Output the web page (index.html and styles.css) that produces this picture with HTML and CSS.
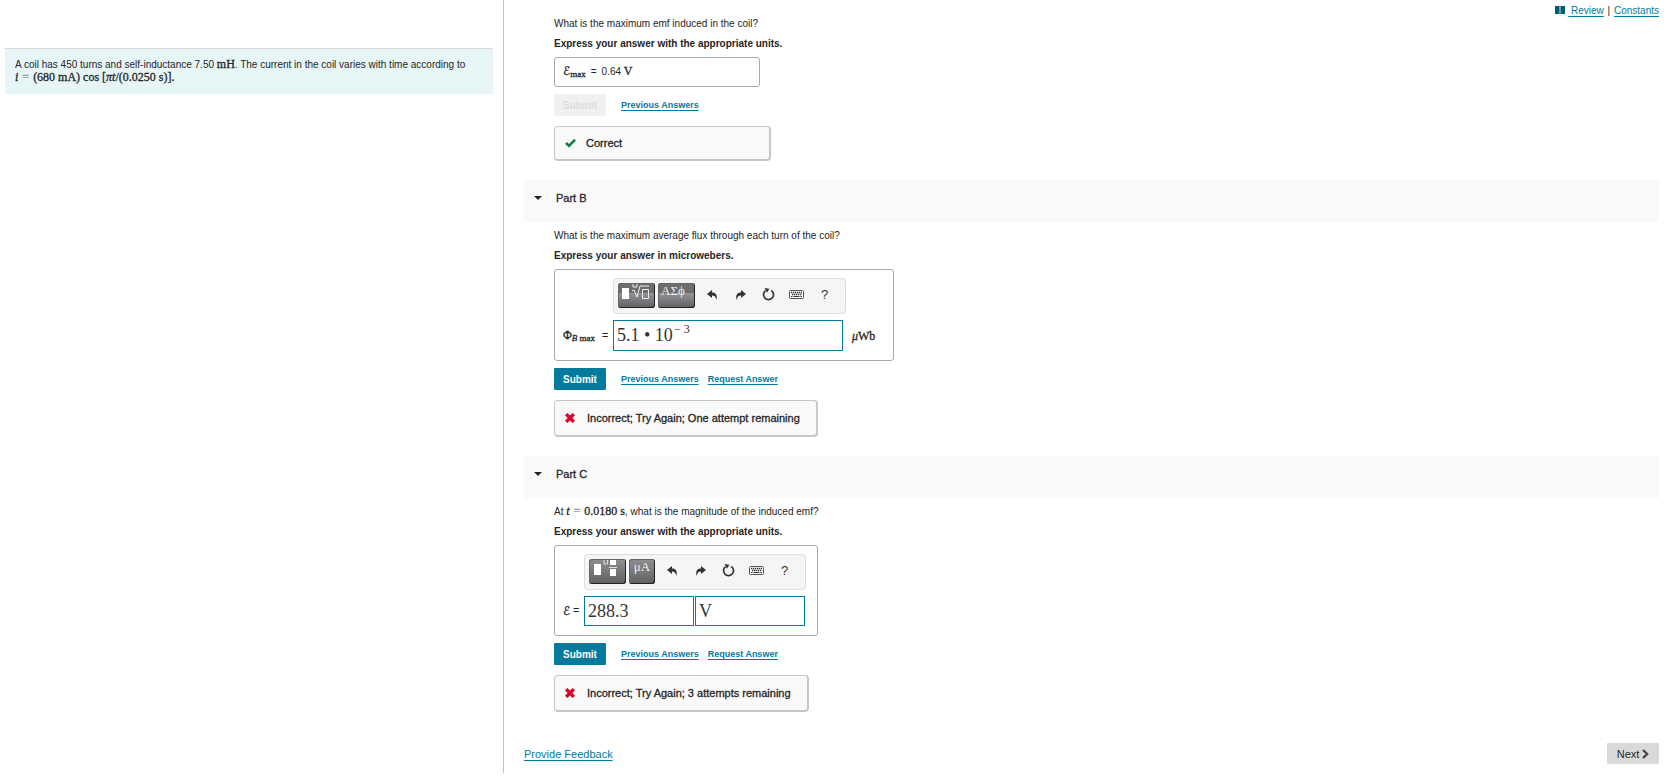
FILE: index.html
```html
<!DOCTYPE html>
<html lang="en">
<head>
    <meta charset="UTF-8">
    <meta name="viewport" content="width=device-width, initial-scale=1.0">
    <title>Self-inductance of a coil</title>
    <link rel="stylesheet" href="styles.css">
</head>
<body>

<svg class="sprite" width="0" height="0" aria-hidden="true">
    <symbol id="undo" viewBox="0 0 12 12">
        <path d="M0 5 L5 1 V3.5 C9 3.5 10.5 6 9.5 11 C8.8 8 7.5 6.6 5 6.6 V9 Z"/>
    </symbol>
    <symbol id="redo" viewBox="0 0 12 12">
        <path d="M11 5 L6 1 V3.5 C2 3.5 .5 6 1.5 11 C2.2 8 3.5 6.6 6 6.6 V9 Z"/>
    </symbol>
    <symbol id="reset" viewBox="0 0 13 13">
        <path d="M9.2 2.4 A5 5 0 1 1 3.6 2.6" fill="none" stroke="#333" stroke-width="1.7"/>
        <path d="M2.6 0 L7.4 .8 L5 4.8 Z"/>
    </symbol>
    <symbol id="keyboard" viewBox="0 0 15 9">
        <rect x=".5" y=".5" width="14" height="8" rx="1" fill="#fff" stroke="#555"/>
        <path d="M2 2.5 H13 M3 4.5 H13" stroke="#333" stroke-width="1.4" stroke-dasharray="1.3 .7"/>
        <path d="M2 6.5 H3.5 M4.5 6.5 H10.5 M11.5 6.5 H13" stroke="#333"/>
    </symbol>
    <symbol id="cross" viewBox="0 0 10 10">
        <path d="M0 2.3 L2.3 0 L5 2.6 L7.7 0 L10 2.3 L7.3 5 L10 7.7 L7.7 10 L5 7.4 L2.3 10 L0 7.7 L2.7 5 Z" fill="#e00025"/>
    </symbol>
</svg>

<div class="page">
    <aside class="problem">
        <p>A coil has 450 turns and self-inductance 7.50 <span class="math">mH</span>. The current in the coil varies with time according to <span class="math formula"><i>i</i> <span class="eq">=</span> (680 mA) cos [<i>πt</i>/(0.0250 s)].</span></p>
    </aside>

    <main>
        <nav>
            <a href="#"><svg width="10" height="8" viewBox="0 0 10 8"><path d="M0 0 H4.6 V8 H0 Z M5.4 0 H10 V8 H5.4 Z" fill="#005a70"/></svg></a><a href="#">&nbsp;Review</a>
            <span class="sep">|</span>
            <a href="#">Constants</a>
        </nav>

        <section class="part first">
            <p class="question">What is the maximum emf induced in the coil?</p>
            <p class="units">Express your answer with the appropriate units.</p>
            <div class="answer given">
                <span class="math"><span class="script">ℰ</span><sub>max</sub></span><span>=</span><span>0.64 <span class="math">V</span></span>
            </div>
            <div class="actions">
                <button class="submit" disabled>Submit</button>
                <a href="#">Previous Answers</a>
            </div>
            <div class="feedback correct">
                <svg width="11" height="9" viewBox="0 0 11 9"><path d="M0 5 L2 3 L4 5 L9 0 L11 1.6 L4.2 8.6 Z" fill="#0a7d3e"/></svg>
                <span>Correct</span>
            </div>
        </section>

        <h2><span class="arrow"></span>Part B</h2>
        <section class="part">
            <p class="question">What is the maximum average flux through each turn of the coil?</p>
            <p class="units">Express your answer in microwebers.</p>
            <div class="answer flux">
                <div class="toolbar">
                    <button class="tool dark split" aria-label="Templates">
                        <svg width="37" height="25" viewBox="0 0 37 25"><rect x="4" y="5" width="7" height="11" fill="#fff"/><path d="M14 8 L16 7 L19 14 L22 3 H31 M15 1 V4 H19 V1 M24.5 6.5 H30.5 V15.5 H24.5 Z" fill="none" stroke="#eee"/></svg>
                    </button>
                    <button class="tool dark split greek">ΑΣϕ</button>
                    <button class="tool" aria-label="Undo"><svg width="12" height="12"><use href="#undo"/></svg></button>
                    <button class="tool" aria-label="Redo"><svg width="12" height="12"><use href="#redo"/></svg></button>
                    <button class="tool" aria-label="Reset"><svg width="13" height="13"><use href="#reset"/></svg></button>
                    <button class="tool" aria-label="Keyboard"><svg width="15" height="9"><use href="#keyboard"/></svg></button>
                    <button class="tool">?</button>
                </div>
                <label class="math" for="flux"><span>Φ<sub><i>B</i> max</sub></span> <span class="equals">=</span></label>
                <div class="field">
                    <input id="flux" class="base" value="5.1 • 10">
                    <input class="exponent" value="− 3" aria-label="Exponent">
                </div>
                <span class="math unit"><i>μ</i>Wb</span>
            </div>
            <div class="actions">
                <button class="submit">Submit</button>
                <a href="#">Previous Answers</a>
                <a href="#">Request Answer</a>
            </div>
            <div class="feedback">
                <svg width="10" height="10"><use href="#cross"/></svg>
                <span>Incorrect; Try Again; One attempt remaining</span>
            </div>
        </section>

        <h2><span class="arrow"></span>Part C</h2>
        <section class="part">
            <p class="question">At <span class="math"><i>t</i> <span class="eq">=</span> 0.0180 s</span>, what is the magnitude of the induced emf?</p>
            <p class="units">Express your answer with the appropriate units.</p>
            <div class="answer emf">
                <div class="toolbar">
                    <button class="tool dark" aria-label="Templates">
                        <svg width="37" height="25" viewBox="0 0 37 25"><rect x="5" y="5" width="7" height="11" fill="#fff"/><path d="M15 1 V5 H18.5 V1 M20 8.5 H28" fill="none" stroke="#ddd"/><rect x="21" y="1" width="6" height="5" fill="#fff"/><rect x="21" y="10" width="6" height="7" fill="#fff"/></svg>
                    </button>
                    <button class="tool dark narrow">μA</button>
                    <button class="tool" aria-label="Undo"><svg width="12" height="12"><use href="#undo"/></svg></button>
                    <button class="tool" aria-label="Redo"><svg width="12" height="12"><use href="#redo"/></svg></button>
                    <button class="tool" aria-label="Reset"><svg width="13" height="13"><use href="#reset"/></svg></button>
                    <button class="tool" aria-label="Keyboard"><svg width="15" height="9"><use href="#keyboard"/></svg></button>
                    <button class="tool">?</button>
                </div>
                <label class="math" for="emf"><span class="script">ℰ</span> <span class="equals">=</span></label>
                <div class="pair">
                    <input id="emf" class="field" value="288.3">
                    <input class="field" value="V" aria-label="Units">
                </div>
            </div>
            <div class="actions">
                <button class="submit">Submit</button>
                <a href="#">Previous Answers</a>
                <a href="#">Request Answer</a>
            </div>
            <div class="feedback">
                <svg width="10" height="10"><use href="#cross"/></svg>
                <span>Incorrect; Try Again; 3 attempts remaining</span>
            </div>
        </section>

        <footer>
            <a href="#">Provide Feedback</a>
            <button class="next">Next <svg width="7" height="10" viewBox="0 0 7 10"><path d="M1 1 L5.2 5 L1 9" fill="none" stroke="#444" stroke-width="2.2"/></svg></button>
        </footer>
    </main>
</div>

</body>
</html>
```
FILE: styles.css
```css
* {
    box-sizing: border-box;
}
body {
    margin: 0;
    background: #fff;
    color: #252525;
    font-family: "Liberation Sans", Arial, sans-serif;
    font-size: 10px;
    line-height: 14px;
}
p, h2 {
    margin: 0;
}
a {
    color: #047a9c;
    text-underline-offset: 2px;
}
button, input {
    font-family: inherit;
    margin: 0;
    padding: 0;
    border: 0;
}
.sprite {
    position: absolute;
}
.page {
    display: flex;
}
.problem {
    flex: 0 0 calc(30% + 2px);
    padding: 48px 10px 0 5px;
}
.problem p {
    padding: 9px 10px 10px;
    border-top: 1px solid #d9d9d9;
    background: #e6f6f7;
    line-height: 13px;
}
main {
    flex: 1;
    padding: 0 11px 9px 20px;
    border-left: 1px solid #b8c4cf;
}

/* math text */
.math {
    font-family: "Liberation Serif", "DejaVu Serif", serif;
    font-size: 12px;
    line-height: 1;
    -webkit-text-stroke: 0.3px;
}
.math sub {
    font-size: 9px;
    line-height: 1;
    vertical-align: -2px;
}
.script {
    font-family: "DejaVu Sans", sans-serif;
}
.formula {
    display: block;
    line-height: 13px;
}
.eq {
    margin: 0 1px;
    color: #999;
}
.equals {
    font-family: "Liberation Sans", Arial, sans-serif;
    font-size: 10px;
}

nav {
    float: right;
    padding-top: 4px;
}
nav svg {
    margin-right: 3px;
}
.sep {
    margin: 0 1px;
}
.part {
    padding: 7px 0 0 30px;
}
.part.first {
    padding-top: 17px;
}
.question {
    margin-bottom: 6px;
    height: 14px;
}
.units {
    margin-bottom: 6px;
    font-weight: bold;
}
h2 {
    display: flex;
    align-items: center;
    margin-top: 19px;
    padding: 11px 10px 17px;
    background: #f9f9f9;
    font-size: 11px;
    font-weight: normal;
    -webkit-text-stroke: 0.3px;
}
.arrow {
    margin-right: 14px;
    border: 4px solid transparent;
    border-top: 4px solid #252525;
    border-bottom: 0;
}

/* answer boxes */
.answer {
    width: fit-content;
    border: 1px solid #aaa;
    border-radius: 3px;
}
.given {
    display: flex;
    align-items: center;
    gap: 5px;
    width: 206px;
    height: 30px;
    padding: 0 8px;
}
.flux, .emf {
    display: grid;
    align-items: center;
    row-gap: 6px;
    padding: 8px 12px 9px 8px;
}
.flux {
    grid-template-columns: 50px 230px 38px;
}
.emf {
    grid-template-columns: 21px 221px;
}
.answer label {
    display: flex;
    align-items: center;
    justify-content: space-between;
    padding-right: 5px;
    white-space: nowrap;
}
.toolbar {
    display: flex;
    align-items: flex-start;
    grid-column: 2 / -1;
    justify-self: start;
    gap: 3px;
    height: 36px;
    padding: 4px 8px 4px 4px;
    border: 1px solid #ddd;
    border-radius: 4px;
    background: #f5f5f5;
}
.tool {
    display: flex;
    align-items: center;
    justify-content: center;
    width: 25px;
    height: 23px;
    background: none;
    color: #333;
    font-size: 13px;
}
.dark + .tool:not(.dark) {
    margin-left: 2px;
}
.tool svg {
    fill: #333;
}
.dark {
    align-items: flex-start;
    width: 37px;
    height: 25px;
    border-radius: 3px;
    background: linear-gradient(#8f8f92, #606063);
    box-shadow: inset -1px -1px #222, inset 1px 1px #666;
    color: #eee;
    font-family: "Liberation Serif", serif;
    line-height: 16px;
}
.split {
    background: linear-gradient(#6d6d70 40%, #939397 40%, #606063);
}
.greek {
    justify-content: flex-start;
    padding-left: 3px;
}
.narrow {
    width: 26px;
}
.field {
    height: 30px;
    padding-left: 3px;
    border: 1px solid #047a9c;
    background: #fff;
}
.field, .field input {
    color: #333;
    font-family: "Liberation Serif", serif;
    font-size: 18px;
}
.flux .field {
    display: flex;
    height: 31px;
}
.field .base {
    width: 57px;
}
.field .exponent {
    width: 40px;
    height: 17px;
    font-size: 12px;
}
.pair {
    display: flex;
    gap: 1px;
}
.pair .field {
    flex: 1;
    min-width: 0;
}
.unit {
    margin-left: 9px;
}

.actions {
    display: flex;
    align-items: center;
    gap: 9px;
    margin-top: 7px;
    font-weight: bold;
    font-size: 9px;
}
.submit {
    width: 52px;
    height: 22px;
    margin-right: 6px;
    border-radius: 1px;
    background: #047a9c;
    color: #fff;
    font-size: 10px;
    font-weight: bold;
}
.submit:disabled {
    background: #f0f0f0;
    color: #dcdcdc;
}
.feedback {
    display: flex;
    align-items: center;
    gap: 12px;
    width: fit-content;
    height: 37px;
    margin-top: 10px;
    padding: 0 16px 0 10px;
    border: 1px solid #c7c7c7;
    border-right-width: 2px;
    border-bottom-width: 2px;
    border-radius: 4px;
    background: #f9f9f9;
    font-size: 11px;
    -webkit-text-stroke: 0.3px;
}
.correct {
    width: 217px;
    height: 35px;
    gap: 10px;
}
footer {
    display: flex;
    justify-content: space-between;
    align-items: center;
    margin-top: 31px;
    font-size: 11px;
}
.next {
    display: flex;
    align-items: center;
    justify-content: center;
    gap: 3px;
    width: 52px;
    height: 21px;
    border-radius: 1px;
    background: #d9d9d9;
    color: #252525;
    font-size: 11px;
}
```
